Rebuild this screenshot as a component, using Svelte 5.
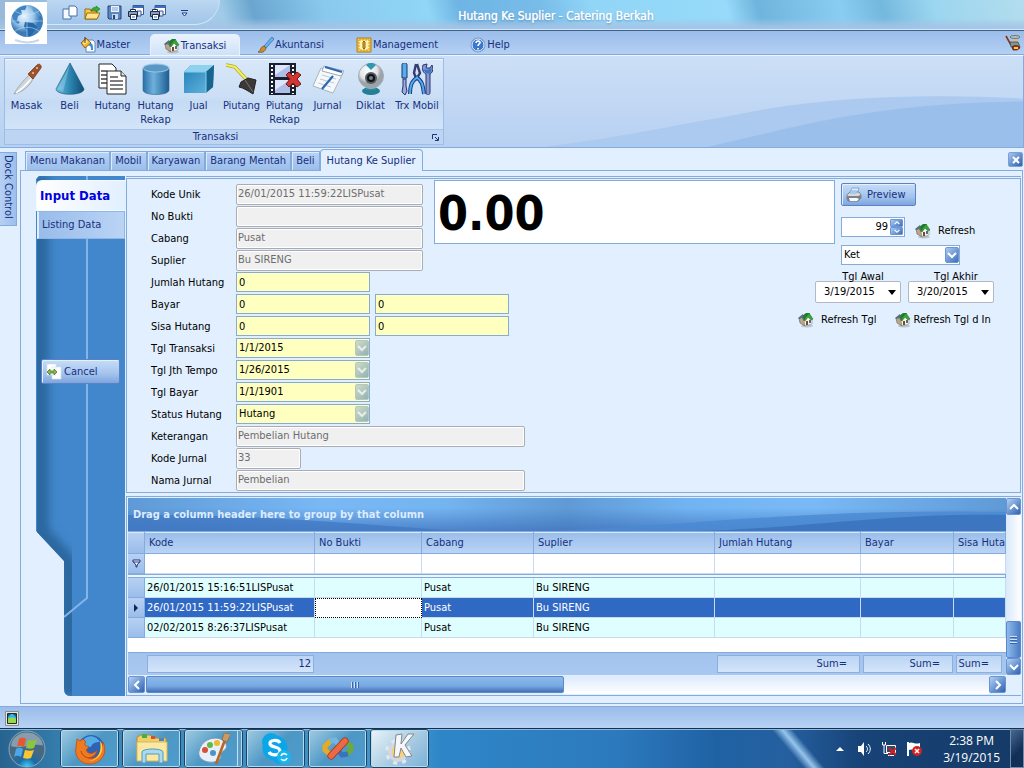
<script lang="ts">
  const ribbonTabs = [
    { label: 'Master', icon: 'bucket' },
    { label: 'Transaksi', icon: 'house' },
    { label: 'Akuntansi', icon: 'brush' },
    { label: 'Management', icon: 'dial' },
    { label: 'Help', icon: 'help' },
  ];

  const ribbonItems = [
    { label: 'Masak', icon: 'knife' },
    { label: 'Beli', icon: 'cone' },
    { label: 'Hutang', icon: 'docs' },
    { label: 'Hutang Rekap', icon: 'cylinder' },
    { label: 'Jual', icon: 'box' },
    { label: 'Piutang', icon: 'axe' },
    { label: 'Piutang Rekap', icon: 'film' },
    { label: 'Jurnal', icon: 'notepad' },
    { label: 'Diklat', icon: 'webcam' },
    { label: 'Trx Mobil', icon: 'tools' },
  ];

  const docTabs = ['Menu Makanan', 'Mobil', 'Karyawan', 'Barang Mentah', 'Beli', 'Hutang Ke Suplier'];

  const fields = [
    { id: 'kode-unik', label: 'Kode Unik', kind: 'locked', value: '26/01/2015 11:59:22LISPusat', size: 'medium' },
    { id: 'no-bukti', label: 'No Bukti', kind: 'locked', value: '', size: 'medium' },
    { id: 'cabang', label: 'Cabang', kind: 'locked', value: 'Pusat', size: 'medium' },
    { id: 'suplier', label: 'Suplier', kind: 'locked', value: 'Bu SIRENG', size: 'medium' },
    { id: 'jumlah', label: 'Jumlah Hutang', kind: 'number', value: '0', size: 'short' },
    { id: 'bayar', label: 'Bayar', kind: 'pair', value: '0', size: 'short' },
    { id: 'sisa', label: 'Sisa Hutang', kind: 'pair', value: '0', size: 'short' },
    { id: 'tgl-transaksi', label: 'Tgl Transaksi', kind: 'date', value: '1/1/2015', size: 'short' },
    { id: 'tgl-tempo', label: 'Tgl Jth Tempo', kind: 'date', value: '1/26/2015', size: 'short' },
    { id: 'tgl-bayar', label: 'Tgl Bayar', kind: 'date', value: '1/1/1901', size: 'short' },
    { id: 'status', label: 'Status Hutang', kind: 'select', value: 'Hutang', size: 'short' },
    { id: 'keterangan', label: 'Keterangan', kind: 'locked', value: 'Pembelian Hutang', size: 'long' },
    { id: 'kode-jurnal', label: 'Kode Jurnal', kind: 'locked', value: '33', size: 'tiny' },
    { id: 'nama-jurnal', label: 'Nama Jurnal', kind: 'locked', value: 'Pembelian', size: 'long' },
  ];

  const columns = ['Kode', 'No Bukti', 'Cabang', 'Suplier', 'Jumlah Hutang', 'Bayar', 'Sisa Hutang'];
  const footer = ['12', '', '', '', 'Sum=', 'Sum=', 'Sum='];

  const records = [
    ['26/01/2015 15:16:51LISPusat', '', 'Pusat', 'Bu SIRENG', '', '', ''],
    ['26/01/2015 11:59:22LISPusat', '', 'Pusat', 'Bu SIRENG', '', '', ''],
    ['02/02/2015 8:26:37LISPusat', '', 'Pusat', 'Bu SIRENG', '', '', ''],
  ];

  const quickActions = ['new', 'open', 'save', 'print', 'print'];
  const taskApps = ['firefox', 'explorer', 'paint', 'skype', 'studio', 'kde'];

  let activeRibbon = $state('Transaksi');
  let activeDoc = $state('Hutang Ke Suplier');
  let selected = $state(1);
</script>

{#snippet chevron(dir: string)}
  <svg class="chevron" viewBox="0 0 10 10" width="10" height="10" aria-hidden="true">
    {#if dir === 'down'}
      <path d="M1 3 5 7 9 3" />
    {:else if dir === 'up'}
      <path d="M1 7 5 3 9 7" />
    {:else if dir === 'left'}
      <path d="M7 1 3 5 7 9" />
    {:else}
      <path d="M3 1 7 5 3 9" />
    {/if}
  </svg>
{/snippet}

{#snippet smallIcon(name: string)}
  <svg viewBox="0 0 16 16" width="16" height="16" aria-hidden="true">
    {#if name === 'house'}
      <ellipse cx="9" cy="14" rx="6" ry="1.500" fill="#8b99a8" opacity=".5" />
      <path d="M1 6 4 4 8 8 7 14 2 11Z" fill="#b9a68c" stroke="#5b4a3a" stroke-width=".5" />
      <path d="M6 8 10 4 14 7V12L7 14Z" fill="#f8f4e8" stroke="#7b7263" stroke-width=".5" />
      <path d="M4 4 8 1 12 1 8 5 6 9Z" fill="#1f7d28" />
      <path d="M8 5 11 1 15 7 13 8 10 5 7 9 6 8Z" fill="#37a53c" stroke="#186420" stroke-width=".5" />
      <path d="M0 6 5 2 6 9 4 6 1 7Z" fill="#55707a" />
      <path d="M8 9h2v4H8z" fill="#7a4a2c" /><path d="M11 8h2v3h-2z" fill="#4f6d8c" />
    {:else if name === 'bucket'}
      <path d="M6 3h7l2 2v10H6z" fill="#fff" stroke="#5d86bd" />
      <path d="M9 6c4 0 4 2 4 7h-2c0-3 0-4-3-5z" fill="#2f8fe0" />
      <path d="M1 6 6 1 11 6 5 11Z" fill="#f4b32c" stroke="#7a4f10" stroke-width=".8" />
      <path d="M3 6 6 3 8 5 4 8Z" fill="#ffe9a0" />
      <path d="M5 6V0" stroke="#4a3316" />
    {:else if name === 'brush'}
      <path d="M14 0 16 2 8 11 6 9Z" fill="#67b2f0" stroke="#2867a8" stroke-width=".7" />
      <path d="M6 9 8 11C7 15 4 16 0 15 3 14 2 10 6 9Z" fill="#d08b2c" stroke="#704310" stroke-width=".7" />
    {:else if name === 'dial'}
      <path d="M1 1h14v14H1z" fill="#f3c94c" stroke="#b37d12" />
      <path d="M3 3h10v10H3z" fill="#fff1a8" stroke="#d09c28" stroke-dasharray="2 1" />
      <path d="M8 4 9 5V11L8 12 7 11V5Z" fill="#f3b32a" stroke="#6b4707" stroke-width=".8" />
    {:else if name === 'help'}
      <circle cx="8" cy="8" r="7" fill="#3a78cf" stroke="#7f9cc6" />
      <circle cx="8" cy="8" r="6" fill="none" stroke="#e8f3ff" />
      <path d="M6 6c0-3 5-2 4 0-.5 1-2 1-2 3M8 11v1.500" fill="none" stroke="#fff" stroke-width="1.600" />
    {:else if name === 'new'}
      <path d="M1 4h6l2 2v8H1z" fill="#f4f9ff" stroke="#466fae" />
      <path d="M7 1h6l2 2v8H7z" fill="#fff" stroke="#466fae" />
    {:else if name === 'open'}
      <path d="M1 4h5l1 2h6v8H1z" fill="#f7c948" stroke="#9a6c10" />
      <path d="M3 8h13l-3 6H1z" fill="#ffe48c" stroke="#9a6c10" />
      <path d="M7 6c1-4 4-4 5-3V1l4 3-4 3V5c-2 0-3 0-5 1z" fill="#38b22f" stroke="#17720f" stroke-width=".6" />
    {:else if name === 'save'}
      <path d="M2 1h13v13H3l-1-1z" fill="#5d86bf" stroke="#22447c" />
      <path d="M5 1h8v6H5z" fill="#eaf4ff" />
      <path d="M6 3h6M6 5h6" stroke="#7fa3cf" />
      <path d="M6 9h6v5H6z" fill="#c7d7ea" /><path d="M7 10h2v4H7z" fill="#22447c" />
    {:else if name === 'print'}
      <path d="M5 .5h10.500v9H5z" fill="#fff" stroke="#3c588c" />
      <path d="M5 2h10" stroke="#3a6fc4" stroke-width="2" />
      <path d="M9 6h4v5H9z" fill="#dfeafa" stroke="#3c588c" />
      <path d="M.5 6.500h9v5h-9z" fill="#8c9cb8" stroke="#1d2c4c" />
      <path d="M2.500 4.500h5v2h-5zM2.500 9.500h6v5h-6z" fill="#fff" stroke="#1d2c4c" />
      <path d="M4 12h3" stroke="#3a6fc4" />
    {:else if name === 'printer'}
      <path d="M6 1h7l-2 6H3z" fill="#dceeff" stroke="#6c8fb7" stroke-width=".7" />
      <path d="M1 8 4 5H13L15 8V11L12 14H2L1 12Z" fill="#d6d8db" stroke="#5f646c" stroke-width=".7" />
      <path d="M5 3h6l-1 4H4z" fill="#9fcbf0" />
      <path d="M1 9h11l3-1v3l-3 3H2l-1-2z" fill="#7c8289" /><path d="M3 11h8l2 1-2 2H4z" fill="#f7f9fb" />
    {:else if name === 'cancel'}
      <path d="M1 0h9v11H1zM6 3h9v12H6z" fill="#fff" stroke="#d5dfe9" stroke-width=".6" />
      <path d="M1 8 4 5V7H8V5L11 8 8 11V9H4V11Z" fill="#86b552" stroke="#527d28" stroke-width=".8" />
    {:else if name === 'chef'}
      <path d="M1 1 6 10" stroke="#8a3218" stroke-width="1.600" />
      <ellipse cx="10" cy="2" rx="5" ry="1.500" fill="#b7c2b8" stroke="#3f4a43" stroke-width=".6" />
      <path d="M8 4h4v3H8z" fill="#e4b386" />
      <path d="M5 7h8l2 5H6z" fill="#7d959a" stroke="#344346" stroke-width=".7" />
      <path d="M7 12c2-2 7-2 8 1l-3 2H8z" fill="#a83218" stroke="#442011" stroke-width=".7" /><path d="M9 13h4" stroke="#ffca36" stroke-width="2" />
    {:else if name === 'picture'}
      <path d="M1.500 1.500h13v14h-13z" fill="#e8e5df" stroke="#8a8d8a" />
      <path d="M3.500 3.500h9v10h-9z" fill="#34b7df" stroke="#222b33" />
      <path d="M4 4h3L4 7zM12 4H9l3 3z" fill="#1c5b78" />
      <path d="M4 9c2-2 6-2 8 0v4H4z" fill="#99d84a" />
    {/if}
  </svg>
{/snippet}

{#snippet ribbonIcon(name: string)}
  <svg viewBox="0 0 32 32" width="32" height="32" aria-hidden="true">
    {#if name === 'knife'}
      <path d="M18 12 22 16C18 24 11 29 3 31 6 25 12 18 18 12Z" fill="#cfd6da" stroke="#8c979e" stroke-width=".7" />
      <path d="M5 30C11 26 16 21 20 16" stroke="#fff" fill="none" stroke-width="1.500" />
      <path d="M17 11 26 2C28 0 31 2 30 5L22 16Z" fill="#a0522a" stroke="#6a2d12" stroke-width=".7" />
      <circle cx="26" cy="5" r="1" fill="#efc5a0" /><circle cx="22" cy="10" r="1" fill="#efc5a0" />
    {:else if name === 'cone'}
      <path d="M16 0 30 26C30 33 2 33 2 26Z" fill="url(#steel)" stroke="#155478" stroke-width=".6" />
      <path d="M16 1 9 29 4 26Z" fill="#c7efff" opacity=".3" />
    {:else if name === 'docs'}
      <path d="M2 1h13l4 4v20H2z" fill="#fff" stroke="#222" />
      <path d="M4 8h6M4 12h6M4 16h6M4 20h6" stroke="#444" stroke-width="1.400" />
      <path d="M10 8h14l5 5v18H10z" fill="#fff" stroke="#222" /><path d="M24 8v5h5" fill="#ddd" stroke="#222" />
      <path d="M13 14h8M13 18h13M13 22h13M13 26h13" stroke="#555" stroke-width="1.400" />
    {:else if name === 'cylinder'}
      <path d="M3 5V27C3 33 29 33 29 27V5Z" fill="url(#steelwide)" stroke="#2b6691" stroke-width=".6" />
      <ellipse cx="16" cy="5" rx="13" ry="4" fill="#5b97c5" stroke="#93c9e8" />
    {:else if name === 'box'}
      <path d="M1 9 8 2H31L30 24 22 30H1Z" fill="#2f87b9" />
      <path d="M1 9 8 2H31L23 9Z" fill="#8fd2ee" /><path d="M1 9H23V30H1Z" fill="url(#face)" />
      <path d="M23 9 31 2 30 24 23 30Z" fill="#19648f" /><path d="M1 9H23V30" fill="none" stroke="#80cfee" />
    {:else if name === 'axe'}
      <path d="M0 2 5 3 9 4 19 15 23 18" fill="none" stroke="#aaa82c" stroke-width="3.600" />
      <path d="M0 2 5 3 9 4 19 15 23 18" fill="none" stroke="#f5ee5c" stroke-width="2.200" />
      <path d="M15 19 22 15 30 17 27 31C22 28 18 25 13 24Z" fill="#3c3838" stroke="#222" />
      <path d="m19 17 8 12" stroke="#777" />
    {:else if name === 'film'}
      <path d="M0 0h27v32H0z" fill="#1b2030" /><path d="M6 2h15v12H6zM6 17h15v13H6z" fill="#aebfe7" />
      <path d="m6 2 15 0-15 10zM6 17h15L6 27z" fill="#dce6fb" />
      <path d="M3 2v29M24 2v29" stroke="#fff" stroke-width="2" stroke-dasharray="2 2" />
      <path d="m17 12 3-3 4 4 4-4 4 3-4 4 4 5-4 3-4-4-4 4-3-3 4-5z" fill="#cf3531" stroke="#7c1515" />
    {:else if name === 'notepad'}
      <path d="M9 5 31 10 21 30 1 23Z" fill="#f6f9fc" stroke="#a8b4c0" />
      <path d="M12 3 32 8 29 13 10 8Z" fill="#fff" stroke="#9cabba" />
      <path d="m10 12 14 4M8 16l14 4M6 20l13 4" stroke="#b8c9da" />
      <path d="M13 4 30 9M10 26 21 13" stroke="#2d69ae" stroke-width="2.200" />
    {:else if name === 'webcam'}
      <ellipse cx="16" cy="28" rx="9" ry="4" fill="#247f96" /><path d="M11 23h10v4H11z" fill="#2b8ea6" />
      <circle cx="16" cy="13" r="12.500" fill="url(#orb)" stroke="#a7adb3" />
      <path d="M11 2c3-3 7-3 10 0l-5 5z" fill="#2f9aaf" />
      <circle cx="16" cy="15" r="6" fill="#555a60" /><circle cx="16" cy="15" r="4" fill="#111" />
      <circle cx="16" cy="15" r="2" fill="#6f7f91" />
    {:else if name === 'tools'}
      <path d="M1 2c0-3 5-3 5 0v13H1z" fill="#53aef0" stroke="#173669" /><path d="M2 16h3v7l1 5-2 4-3-3 1-6z" fill="#9dabdf" stroke="#29356c" />
      <path d="M15 1 13 10 15 15M16 1 19 10 16 15" fill="none" stroke="#343c70" stroke-width="2.400" />
      <path d="M17 14C10 18 9 24 9 31M15 14C22 18 22 24 23 31" fill="none" stroke="#183e82" stroke-width="4" />
      <path d="M17 14C10 18 9 24 9 31M15 14C22 18 22 24 23 31" fill="none" stroke="#55a9ef" stroke-width="2" />
      <path d="M22 2 26 1 25 5 29 5 31 2C33 7 31 10 29 11V29C29 33 25 33 25 29V11C21 9 21 5 22 2Z" fill="#8b97d1" stroke="#27356e" />
      <path d="M22 6 26 7 31 5 29 11 25 10Z" fill="#3974c5" />
    {/if}
  </svg>
{/snippet}

{#snippet taskIcon(name: string)}
  <svg viewBox="0 0 32 32" width="32" height="32" aria-hidden="true">
    {#if name === 'firefox'}
      <circle cx="17" cy="15" r="13" fill="#2d62b6" /><path d="M10 6c5-5 13-3 16 3-4 0-8 1-9 5l-6-1z" fill="#55abe4" />
      <path d="M3 6 6 8 9 6 12 9C8 13 14 13 15 14L12 17C14 22 20 21 23 17 21 27 9 27 7 18 9 27 25 30 28 14L29 9C35 22 25 31 16 31 6 31 0 23 2 14Z" fill="#ef7b20" stroke="#c74715" stroke-width=".8" />
      <path d="M28 11c2 10-5 17-13 17 10-2 13-10 11-20z" fill="#ffd23c" />
    {:else if name === 'explorer'}
      <path d="M1 4 5 2H14L17 5H30V27H1Z" fill="#f0ce69" stroke="#b18d35" />
      <path d="M6 1h5v4H6z" fill="#48ad48" /><path d="M15 3h4v3h-4z" fill="#d54c37" /><path d="M23 5h5v3h-5z" fill="#4487d0" />
      <path d="M1 9H31V28H1Z" fill="#fbe8a1" stroke="#d8b75d" />
      <path d="M6 19c0-4 21-4 21 0v11h-4v-9H10v9H6z" fill="#a9daf2" stroke="#5697bd" />
    {:else if name === 'paint'}
      <path d="M1 18C4 4 23 1 28 11 31 18 21 17 23 24 20 33-2 30 1 18Z" fill="#e8eff7" stroke="#7696b5" />
      <circle cx="7" cy="17" r="3" fill="#d84f3c" /><circle cx="12" cy="12" r="3" fill="#5fb848" /><circle cx="19" cy="10" r="3" fill="#eeb832" /><circle cx="15" cy="20" r="3" fill="#4a93cc" />
      <path d="M28 4 18 31" stroke="#b76823" stroke-width="2.600" /><path d="M24 7 26 0 33 1 29 9Z" fill="#c99a68" stroke="#8a5e32" stroke-width=".6" />
    {:else if name === 'skype'}
      <circle cx="11" cy="9" r="9" fill="#0aa6e8" /><circle cx="20" cy="23" r="8" fill="#0aa6e8" /><circle cx="15" cy="15" r="12.500" fill="#0aa6e8" />
      <path d="M20 10C18 6 9 7 10 11 11 15 20 13 20 18 20 23 11 23 9 19" fill="none" stroke="#fff" stroke-width="3.200" />
      <circle cx="24" cy="24" r="7" fill="#19b5ee" />
      <path d="M21 23c1-3 4-3 6-1M27 25c-1 3-4 3-6 1" fill="none" stroke="#fff" stroke-width="1.600" />
    {:else if name === 'studio'}
      <path d="M10 7 3 13V17L9 22 13 20" fill="none" stroke="#e8aa24" stroke-width="5" stroke-linejoin="round" />
      <path d="m8 8 5-1 6 8" fill="none" stroke="#72b7e4" stroke-width="5" />
      <path d="M22 8 29 13V17L23 22" fill="none" stroke="#6daa3c" stroke-width="5" stroke-linejoin="round" />
      <path d="m15 16 5 6 6-1" fill="none" stroke="#3973bf" stroke-width="5" />
      <path d="M9 23 23 8" stroke="#a92f17" stroke-width="7" stroke-linecap="round" />
      <path d="M9 23 23 8" stroke="#ec6a43" stroke-width="5.500" stroke-linecap="round" />
    {:else if name === 'kde'}
      <circle cx="14" cy="19" r="11" fill="none" stroke="#e3e7eb" stroke-width="4" stroke-dasharray="4 5" />
      <circle cx="14" cy="19" r="8" fill="#e5a92e" stroke="#d2d8de" stroke-width="4" />
      <circle cx="14" cy="19" r="6" fill="#ffd66a" />
      <path d="M12 2 18 1 17 11 24 1H30L21 12 28 23 22 24 17 15 15 24H10Z" fill="#f6f7f9" stroke="#7f8790" />
    {/if}
  </svg>
{/snippet}

<div class="window">
  <!-- shared gradients for the 3D ribbon icons -->
  <svg class="defs" width="0" height="0" aria-hidden="true">
    <defs>
      <linearGradient id="steel"><stop offset="0" stop-color="#6dbde2" /><stop offset=".5" stop-color="#2c86b0" /><stop offset="1" stop-color="#0f4c72" /></linearGradient>
      <linearGradient id="steelwide"><stop offset="0" stop-color="#2a6fa8" /><stop offset=".4" stop-color="#6fb1dc" /><stop offset="1" stop-color="#1b5d91" /></linearGradient>
      <linearGradient id="face" x2="1" y2="1"><stop offset="0" stop-color="#2a86bd" /><stop offset="1" stop-color="#5eb0da" /></linearGradient>
      <radialGradient id="orb" cx=".4" cy=".3"><stop offset="0" stop-color="#fff" /><stop offset=".7" stop-color="#e2e5e8" /><stop offset="1" stop-color="#9aa2aa" /></radialGradient>
      <radialGradient id="globe" cx=".4" cy=".35"><stop offset="0" stop-color="#eaf6ff" /><stop offset=".6" stop-color="#9cc9ec" /><stop offset="1" stop-color="#3b7cb8" /></radialGradient>
      <radialGradient id="start" cx=".5" cy="1"><stop offset="0" stop-color="#3fd6ff" /><stop offset=".5" stop-color="#1c6aa5" /><stop offset="1" stop-color="#466982" /></radialGradient>
    </defs>
  </svg>

  <header class="titlebar">
    <button class="app-button" aria-label="Application menu">
      <svg viewBox="0 0 42 42" width="42" height="42" aria-hidden="true">
        <rect width="42" height="42" fill="#fff" />
        <circle cx="22" cy="19" r="16" fill="url(#globe)" />
        <path d="M7 14C10 7 17 3 22 4L20 8 16 8 17 12 13 14 12 18 15 20 13 22 9 19Z" fill="#3f83c0" />
        <path d="M20 20 28 21 32 25 29 29 26 34 23 34 22 28 19 25Z" fill="#2468aa" />
        <path d="M27 5 33 9 36 14 31 12 28 9Z" fill="#5d9bd0" />
        <path d="M6 19H38M22 3V35M10 9C18 14 26 14 34 9M10 29C18 24 26 24 34 29" stroke="#d5eafa" stroke-width=".5" fill="none" />
        <path d="M10 38c8 3 17 3 24 0" stroke="#c5d9ec" stroke-width="2" fill="none" />
      </svg>
    </button>
    <div class="quick-access">
      {#each quickActions as action}
        <button class="plain" aria-label={action}>{@render smallIcon(action)}</button>
      {/each}
      <button class="plain more" aria-label="Customize toolbar">
        <svg viewBox="0 0 7 7" width="7" height="7"><path d="M0 .5h7" stroke="#1e3c86" /><path d="M1 3h5L3.500 6z" fill="#fff" stroke="#1e3c86" /></svg>
      </button>
    </div>
    <h1>Hutang Ke Suplier - Catering Berkah</h1>
  </header>

  <nav class="ribbon-tabs">
    {#each ribbonTabs as tab}
      <button class:active={activeRibbon === tab.label} onclick={() => (activeRibbon = tab.label)}>
        {@render smallIcon(tab.icon)}{tab.label}
      </button>
    {/each}
    <span class="chef">{@render smallIcon('chef')}</span>
  </nav>

  <section class="ribbon">
    <svg class="swoosh" viewBox="0 0 480 92" preserveAspectRatio="none" aria-hidden="true">
      <path d="M0 92C80 82 120 72 180 62 280 40 380 38 480 43V92Z" fill="#acc9ef" />
      <path d="M165 92C260 70 330 48 480 46V92Z" fill="#9bbfeb" />
    </svg>
    <div class="ribbon-group">
      <div class="ribbon-items">
        {#each ribbonItems as item}
          <button>{@render ribbonIcon(item.icon)}<span>{item.label}</span></button>
        {/each}
      </div>
      <div class="ribbon-caption">
        <span>Transaksi</span>
        <button class="plain" aria-label="Transaksi options">
          <svg viewBox="0 0 7 7" width="7" height="7"><path d="M.5 5V.5H5M3 3 6 6M6.500 3v3.500H3" fill="none" stroke="#1c3479" /></svg>
        </button>
      </div>
    </div>
  </section>

  <main>
    <aside class="dock"><button>Dock Control</button></aside>

    <div class="documents">
      <div class="doc-tabs">
        {#each docTabs as tab}
          <button class:active={activeDoc === tab} onclick={() => (activeDoc = tab)}>{tab}</button>
        {/each}
        <button class="close" aria-label="Close tab">
          <svg viewBox="0 0 8 8" width="8" height="8"><path d="m1 1 6 6M7 1 1 7" stroke="#fff" stroke-width="2" /></svg>
        </button>
      </div>

      <div class="page">
        <nav class="side-nav">
          <svg class="side-shape" viewBox="0 0 90 520" preserveAspectRatio="none" aria-hidden="true">
            <defs>
              <clipPath id="side"><path d="M3 0H89V520H34Q28 520 28 512V385L0 355V3Z" /></clipPath>
              <filter id="soft"><feGaussianBlur stdDeviation="4" /></filter>
            </defs>
            <g clip-path="url(#side)">
              <path d="M0 0H90V520H0Z" fill="#4287cb" />
              <path d="M4 0V356L33 388V520" fill="none" stroke="#2c689f" stroke-width="18" filter="url(#soft)" />
              <path d="M51 0V422L28 441" fill="none" stroke="#83b5ea" stroke-width="2" />
            </g>
          </svg>
          <button class="nav-item current">Input Data</button>
          <button class="nav-item">Listing Data</button>
          <button class="push cancel">{@render smallIcon('cancel')}Cancel</button>
        </nav>

        <div class="work">
          <section class="form">
            <div class="summary">
              <div class="summary-top">
                <output class="total">0.00</output>
                <div class="actions">
                  <button class="push preview">{@render smallIcon('printer')}Preview</button>
                  <div class="line">
                    <span class="spinner">
                      <input type="text" value="99" aria-label="Jumlah baris" />
                      <span class="spin">
                        <button aria-label="Tambah">{@render chevron('up')}</button>
                        <button aria-label="Kurang">{@render chevron('down')}</button>
                      </span>
                    </span>
                    <button class="plain refresh">{@render smallIcon('house')}Refresh</button>
                  </div>
                </div>
              </div>
              <div class="filters">
                <div class="combo white">
                  <select aria-label="Filter"><option>Ket</option></select>
                  <span class="arrow">{@render chevron('down')}</span>
                </div>
                <div class="range">
                  <div class="range-item">
                    <label for="tgl-awal">Tgl Awal</label>
                    <span class="picker"><input id="tgl-awal" value="3/19/2015" /><button aria-label="Pilih tanggal awal"></button></span>
                  </div>
                  <div class="range-item">
                    <label for="tgl-akhir">Tgl Akhir</label>
                    <span class="picker"><input id="tgl-akhir" value="3/20/2015" /><button aria-label="Pilih tanggal akhir"></button></span>
                  </div>
                </div>
                <div class="range-actions">
                  <button class="plain refresh">{@render smallIcon('house')}Refresh Tgl</button>
                  <button class="plain refresh tight">{@render smallIcon('house')}Refresh Tgl d In</button>
                </div>
              </div>
            </div>

            <div class="fields">
              {#each fields as field}
                <div class="field">
                  <label for={field.id}>{field.label}</label>
                  {#if field.kind === 'locked'}
                    <input id={field.id} class={['locked', field.size]} value={field.value} disabled />
                  {:else if field.kind === 'date'}
                    <span class="combo">
                      <input id={field.id} value={field.value} />
                      <button class="arrow" aria-label="Pilih {field.label}">{@render chevron('down')}</button>
                    </span>
                  {:else if field.kind === 'select'}
                    <span class="combo">
                      <select id={field.id}><option>{field.value}</option></select>
                      <span class="arrow">{@render chevron('down')}</span>
                    </span>
                  {:else}
                    <input id={field.id} class="yellow short" value={field.value} />
                    {#if field.kind === 'pair'}
                      <input class="yellow short" value={field.value} aria-label="{field.label} total" />
                    {/if}
                  {/if}
                </div>
              {/each}
            </div>
          </section>

          <section class="grid-panel">
            <div class="grid-body">
              <div class="grid-view">
                <div class="group-banner">
                  <svg viewBox="0 0 878 33" preserveAspectRatio="none" aria-hidden="true">
                    <path d="M0 17C120 16 220 25 330 33H0Z" fill="#3f78c2" opacity=".7" />
                    <path d="M420 33C560 28 680 10 878 14V33Z" fill="#4a89d2" opacity=".8" />
                    <path d="M570 33C680 30 760 15 878 17V33Z" fill="#3a70bb" opacity=".8" />
                  </svg>
                  <span>Drag a column header here to group by that column</span>
                </div>
                <table>
                  <colgroup>
                    <col class="c-mark" /><col class="c-kode" /><col class="c-bukti" /><col class="c-cabang" />
                    <col class="c-suplier" /><col class="c-jumlah" /><col class="c-bayar" /><col />
                  </colgroup>
                  <thead>
                    <tr>
                      <th class="mark"></th>
                      {#each columns as column}
                        <th>{column}</th>
                      {/each}
                    </tr>
                    <tr class="filter-row">
                      <td class="mark">
                        <svg viewBox="0 0 9 9" width="9" height="9"><path d="M1 1h7v2H1zM1.500 3 4 6v2h1V6l2.500-3" fill="#fff" stroke="#1c3479" /></svg>
                      </td>
                      {#each columns as _}
                        <td></td>
                      {/each}
                    </tr>
                    <tr class="divider"><td colspan="8"></td></tr>
                  </thead>
                  <tbody>
                    {#each records as record, i}
                      <tr class:selected={selected === i} onclick={() => (selected = i)}>
                        <td class="mark">
                          {#if selected === i}
                            <svg viewBox="0 0 4 8" width="4" height="8"><path d="M0 0 4 4 0 8Z" fill="#14235c" /></svg>
                          {/if}
                        </td>
                        {#each record as cell, c}
                          <td class:focused={selected === i && c === 1}>{cell}</td>
                        {/each}
                      </tr>
                    {/each}
                    <tr class="blank"><td colspan="8"></td></tr>
                  </tbody>
                  <tfoot>
                    <tr>
                      <td></td>
                      {#each footer as total}
                        <td>
                          {#if total}
                            <div class="sum" class:count={total === '12'}>{total}</div>
                          {/if}
                        </td>
                      {/each}
                    </tr>
                  </tfoot>
                </table>
              </div>
              <div class="v-scroll">
                <button class="scroll-btn" aria-label="Scroll up">{@render chevron('up')}</button>
                <div class="v-track"></div>
                <div class="v-thumb"><i></i><i></i><i></i></div>
                <button class="scroll-btn" aria-label="Scroll down">{@render chevron('down')}</button>
              </div>
            </div>
            <div class="h-scroll">
              <button class="scroll-btn" aria-label="Scroll left">{@render chevron('left')}</button>
              <div class="h-thumb"><i></i><i></i><i></i></div>
              <div class="h-track"></div>
              <button class="scroll-btn" aria-label="Scroll right">{@render chevron('right')}</button>
            </div>
          </section>
        </div>
      </div>
    </div>
  </main>

  <div class="status-bar">{@render smallIcon('picture')}</div>

  <footer class="taskbar">
    <button class="start" aria-label="Start">
      <svg viewBox="0 0 38 38" width="38" height="38" aria-hidden="true">
        <circle cx="19" cy="19" r="18" fill="url(#start)" stroke="#86a9bf" />
        <path d="M3 16C5-2 33-2 35 16 26 12 12 20 3 16Z" fill="#fff" opacity=".35" />
        <path d="M11 9C14 7 16 8 18 9L16 17C14 16 12 15 9 17Z" fill="#e8562b" />
        <path d="M20 10C23 11 26 11 29 9L26 18C24 19 21 19 18 18Z" fill="#8cc63e" />
        <path d="M8 19C11 17 13 18 15 19L13 27C11 26 9 25 6 27Z" fill="#48a8e8" />
        <path d="M17 20C20 21 23 21 26 20L23 28C21 29 18 29 15 28Z" fill="#fbc630" />
      </svg>
    </button>
    <div class="apps">
      {#each taskApps as app}
        <button class={[app === 'kde' && 'running', app === 'paint' && 'stacked']} aria-label={app}>
          {@render taskIcon(app)}
        </button>
      {/each}
    </div>
    <div class="tray">
      <svg viewBox="0 0 8 4" width="8" height="4"><path d="M0 4 4 0 8 4Z" fill="#fff" /></svg>
      <svg viewBox="0 0 16 16" width="16" height="16">
        <path d="M2 5h3l3-4v14l-3-4H2z" fill="#fff" />
        <path d="M10 5c2 2 2 4 0 6M12 3c3 3 3 7 0 10" fill="none" stroke="#fff" />
      </svg>
      <svg viewBox="0 0 16 16" width="16" height="16">
        <path d="M5.500 4.500h9v7h-9z" fill="#33496b" stroke="#fff" /><path d="M1.500 1v3h3V1M3 4v8.500h4M7 14.500h6" fill="none" stroke="#fff" />
        <path d="m8 7 7 7m0-7-7 7" stroke="#d81c1c" stroke-width="2" />
      </svg>
      <svg viewBox="0 0 16 16" width="16" height="16">
        <path d="M2 1v14" stroke="#fff" stroke-width="2" /><path d="M3 2c4-2 5 2 11 0v7c-6 2-7-2-11 0z" fill="#fff" />
        <circle cx="11" cy="10" r="5" fill="#d32222" /><path d="m9 8 4 4m0-4-4 4" stroke="#fff" stroke-width="1.500" />
      </svg>
      <time class="clock"><span>2:38 PM</span><span>3/19/2015</span></time>
    </div>
    <button class="show-desktop" aria-label="Show desktop"></button>
  </footer>
</div>

<style>
  :global(body) {
    margin: 0;
  }

  .window {
    --line: #84abdd;
    --ink: #17307e;
    --panel: #e1effe;
    display: flex;
    flex-direction: column;
    min-height: 100vh;
    background: var(--panel);
    color: #000;
    font-family: 'DejaVu Sans Condensed', Tahoma, sans-serif;
    font-size: 11px;
    line-height: 14px;
  }

  .window,
  .window :is(*, *::before, *::after) {
    box-sizing: border-box;
  }

  .defs {
    position: absolute;
  }

  svg {
    flex: none;
    display: block;
  }

  button,
  input,
  select {
    margin: 0;
    padding: 0;
    border: 0;
    border-radius: 0;
    background: none;
    color: inherit;
    font: inherit;
  }

  input,
  select {
    min-width: 0;
    appearance: none;
    outline: none;
  }

  .plain {
    display: flex;
    align-items: center;
  }

  .chevron path {
    fill: none;
    stroke: #fff;
    stroke-width: 2;
  }

  /* title bar */
  .titlebar {
    display: flex;
    height: 31px;
    border-bottom: 1px solid #3e5f86;
    box-shadow: inset 0 -1px #d4e7fa;
    background:
      linear-gradient(transparent 60%, rgba(165, 196, 230, 0.9) 90%),
      linear-gradient(75deg, #98b9da 0, #a6cbe9 20%, #9fcbe8 22%, #6aa5cf 25%, #8ac9ee 32%, #90d6f6 42%, #6eb5e5 45%, #78bce9 53%, #91d6f7 58%, #97dafa 71%, #6fb4dc 74%, #8acdf2 82%, #74b8de 86%, #9bd6ef 91%, #b3ddee 100%);
  }

  .app-button {
    position: relative;
    z-index: 1;
    height: 42px;
    margin: 2px 0 0 5px;
  }

  .quick-access {
    display: flex;
    align-items: center;
    gap: 6px;
    width: 173px;
    height: 25px;
    padding: 2px 0 0 15px;
    border-bottom: 1px solid #d5e8fa;
    border-right: 1px solid #c8e0f5;
    border-radius: 0 0 40px 0;
    background: linear-gradient(#bcd7f1, #a2c5e9);
  }

  .more {
    margin-left: 9px;
  }

  h1 {
    flex: 1;
    margin: 0;
    padding: 9px 132px 0 0;
    color: #fff;
    font-size: 12px;
    font-weight: 400;
    text-align: center;
    text-shadow: 0 0 1px #fff, 0 1px 2px #4b86b5;
  }

  /* ribbon */
  .ribbon-tabs {
    display: flex;
    align-items: flex-end;
    height: 24px;
    padding: 0 3px 0 60px;
    background: linear-gradient(#9bbdea, #b4d0f3);
    border-bottom: 1px solid var(--line);
  }

  .ribbon-tabs button {
    display: flex;
    align-items: center;
    justify-content: center;
    gap: 1px;
    width: 90px;
    height: 20px;
    padding-top: 1px;
    color: var(--ink);
  }

  .ribbon-tabs button:nth-child(3) {
    margin-left: 4px;
    margin-right: 3px;
    width: 94px;
  }

  .ribbon-tabs button:nth-child(4) {
    width: 112px;
  }

  .ribbon-tabs button:nth-child(5) {
    width: 74px;
  }

  .ribbon-tabs .active {
    height: 21px;
    margin-bottom: -1px;
    border: 1px solid #e8f2fd;
    border-bottom: 0;
    border-radius: 5px 5px 0 0;
    background: linear-gradient(#eaf3fe, #cfe1f7);
  }

  .chef {
    margin: 0 0 3px auto;
  }

  .ribbon {
    position: relative;
    padding: 2px 3px 2px 4px;
    border: 1px solid var(--line);
    border-top-color: #eef6ff;
    border-left-width: 0;
    background: linear-gradient(#ccdff6, #b7d1f2);
  }

  .swoosh {
    position: absolute;
    top: 0;
    right: 0;
    width: 480px;
    height: 100%;
  }

  .ribbon-group {
    position: relative;
    width: 440px;
    border: 1px solid #9dbde8;
    box-shadow: inset 0 1px #f2f8ff;
    background: linear-gradient(#d9e8f9, #cadef5 45%, #c5dbf4 50%, #d9e9fa);
  }

  .ribbon-items {
    display: flex;
    height: 70px;
    padding-top: 4px;
  }

  .ribbon-items button {
    display: flex;
    flex-direction: column;
    align-items: center;
    gap: 4px;
    width: 43px;
    color: var(--ink);
  }

  .ribbon-items button:last-child {
    width: 50px;
    white-space: nowrap;
  }

  .ribbon-caption {
    display: flex;
    align-items: center;
    height: 15px;
    padding-right: 4px;
    border-top: 1px solid #a7c5ec;
    background: #bdd5f3;
    color: var(--ink);
  }

  .ribbon-caption span {
    flex: 1;
    padding-right: 6px;
    text-align: center;
  }

  /* documents */
  main {
    flex: 1;
    display: flex;
    padding-top: 1px;
  }

  .dock {
    width: 20px;
    padding-top: 3px;
  }

  .dock button {
    width: 17px;
    height: 74px;
    padding-bottom: 5px;
    border: 1px solid var(--line);
    border-left: 0;
    background: linear-gradient(90deg, #b5d0f4, #9dbfec);
    color: var(--ink);
    writing-mode: vertical-rl;
    white-space: nowrap;
  }

  .documents {
    flex: 1;
    min-width: 0;
    display: flex;
    flex-direction: column;
    padding: 0 1px 2px 0;
  }

  .doc-tabs {
    display: flex;
    align-items: flex-end;
    height: 21px;
    padding-left: 5px;
  }

  .doc-tabs button {
    height: 19px;
    padding: 0 4px;
    border: 1px solid var(--line);
    border-bottom: 0;
    box-shadow: inset 1px 1px #dcebfc;
    background: linear-gradient(#b8d2f5, #9bbeea);
    color: var(--ink);
    white-space: nowrap;
  }

  .doc-tabs .active {
    z-index: 1;
    height: 22px;
    margin-bottom: -1px;
    padding: 0 6px;
    border-radius: 4px 4px 0 0;
    box-shadow: none;
    background: var(--panel);
  }

  .doc-tabs .close {
    display: grid;
    place-items: center;
    width: 15px;
    height: 15px;
    margin: 0 0 3px auto;
    padding: 0;
    border: 1px solid #7ba0d6;
    border-radius: 2px;
    box-shadow: none;
    background: linear-gradient(135deg, #a5c8f2, #2f5fab);
  }

  .page {
    flex: 1;
    display: flex;
    padding: 5px 1px 7px 15px;
    border: 1px solid var(--line);
  }

  .side-nav {
    position: relative;
    flex: none;
    width: 90px;
    padding-top: 4px;
  }

  .side-shape {
    position: absolute;
    inset: 0;
    width: 100%;
    height: 100%;
  }

  .nav-item {
    position: relative;
    display: block;
    width: 88px;
    height: 28px;
    margin-left: 1px;
    padding-left: 3px;
    border: 1px solid #8fb6e4;
    border-left: 2px solid #e3effd;
    background: linear-gradient(90deg, #98bcea, #bad4f5);
    color: var(--ink);
    text-align: left;
  }

  .nav-item.current {
    width: 90px;
    height: 31px;
    margin-left: 0;
    border: 1px solid #f5faff;
    border-right: 0;
    border-radius: 6px 0 0 0;
    background: linear-gradient(90deg, #fff, var(--panel));
    color: #0000e0;
    font-size: 13px;
    font-weight: 700;
  }

  .push {
    position: relative;
    display: flex;
    align-items: center;
    border: 1px solid #5b82c4;
    border-radius: 2px;
    box-shadow: inset 1px 1px #e4f0fe;
    background: linear-gradient(#c7ddf8, #a3c3ed 60%, #7da5df);
    color: var(--ink);
  }

  .cancel {
    gap: 2px;
    width: 79px;
    height: 25px;
    margin: 120px 0 0 5px;
    padding-left: 4px;
  }

  .work {
    flex: 1;
    min-width: 0;
    display: flex;
    flex-direction: column;
    gap: 3px;
    padding-top: 1px;
    border-top: 1px solid var(--line);
  }

  /* form */
  .form {
    display: grid;
    border: 1px solid var(--line);
  }

  .summary,
  .fields {
    grid-area: 1 / 1;
  }

  .summary {
    margin-left: 307px;
    padding-top: 1px;
  }

  .fields {
    justify-self: start;
    align-self: start;
    padding: 4px 0 1px 24px;
  }

  .field {
    display: flex;
    align-items: center;
    gap: 5px;
    height: 22px;
  }

  .field label {
    width: 80px;
    padding-top: 2px;
    white-space: nowrap;
  }

  .locked {
    height: 21px;
    padding: 0 1px 2px;
    border: 1px solid #a9acb2;
    border-radius: 2px;
    box-shadow: inset 0 0 0 1px #fff;
    background: #f0f0f0;
    color: #6d6d6d;
  }

  .medium {
    width: 187px;
  }

  .short {
    width: 134px;
  }

  .long {
    width: 289px;
  }

  .tiny {
    width: 65px;
  }

  .yellow,
  .combo {
    height: 20px;
    padding: 0 2px;
    border: 1px solid #86abd4;
    background: #ffffbf;
  }

  .combo {
    display: flex;
    align-items: center;
    width: 134px;
    padding-right: 0;
  }

  .combo :is(input, select) {
    flex: 1;
  }

  .arrow {
    display: grid;
    place-items: center;
    width: 14px;
    height: 16px;
    border: 1px solid #b5c9ba;
    border-radius: 2px;
    background: linear-gradient(135deg, #cfdcc4, #93b1b5);
    pointer-events: none;
  }

  .arrow .chevron,
  .combo .chevron {
    opacity: 0.7;
  }

  .combo.white {
    width: 119px;
    height: 20px;
    margin-left: 43px;
    background: #fff;
  }

  .white .arrow,
  .spin button {
    border: 1px solid #6e96d2;
    background: linear-gradient(135deg, #a9cdf4, #3c6fba);
  }

  .white .chevron {
    opacity: 1;
  }

  .summary-top {
    display: flex;
    gap: 6px;
  }

  .total {
    flex: 1;
    height: 64px;
    padding-left: 3px;
    border: 1px solid var(--line);
    background: #fff;
    font-size: 48px;
    font-weight: 700;
    line-height: 64px;
  }

  .actions {
    width: 179px;
    padding-top: 3px;
  }

  .preview {
    gap: 5px;
    width: 75px;
    height: 23px;
    padding-left: 4px;
  }

  .line {
    display: flex;
    gap: 10px;
    padding-top: 11px;
  }

  .spinner {
    display: flex;
    align-items: center;
    gap: 2px;
    width: 64px;
    height: 20px;
    padding-right: 1px;
    border: 1px solid var(--line);
    background: #fff;
  }

  .spinner input {
    flex: 1;
    text-align: right;
  }

  .spin {
    display: flex;
    flex-direction: column;
    width: 13px;
  }

  .spin button {
    display: grid;
    place-items: center;
    height: 8px;
    border-radius: 1px;
  }

  .spin svg {
    width: 8px;
    height: 6px;
  }

  .refresh {
    gap: 7px;
    padding-top: 6px;
  }

  .refresh.tight {
    gap: 3px;
  }

  .filters {
    width: 222px;
    margin-left: auto;
    padding-top: 1px;
  }

  .range {
    display: flex;
    gap: 7px;
    padding: 5px 0 0 17px;
  }

  .range-item {
    width: 86px;
  }

  .range-item label {
    display: block;
    height: 11px;
    padding-left: 10px;
    text-align: center;
  }

  .picker {
    display: flex;
    align-items: center;
    height: 22px;
    padding: 0 4px 0 8px;
    border: 1px solid #b3b9c4;
    border-radius: 2px;
    background: #fff;
  }

  .picker input {
    flex: 1;
  }

  .picker button {
    border: 4px solid transparent;
    border-top: 5px solid #000;
    border-bottom: 0;
  }

  .range-actions {
    display: flex;
    gap: 18px;
    padding-top: 3px;
    white-space: nowrap;
  }

  /* record grid */
  .grid-panel {
    flex: 1;
    display: flex;
    flex-direction: column;
    padding: 1px 0 0 1px;
    border: 1px solid var(--line);
    border-right: 0;
  }

  .grid-body {
    flex: 1;
    display: flex;
  }

  .grid-view {
    flex: 1;
    min-width: 0;
    overflow: hidden;
    background: #fff;
  }

  .group-banner {
    position: relative;
    display: flex;
    align-items: center;
    height: 33px;
    padding-left: 5px;
    background:
      linear-gradient(transparent 30%, rgba(60, 110, 185, 0.7)),
      linear-gradient(90deg, #5f9ad6, #79b8f5 22%, #74b4f0 36%, #5f9ad6 50%, #72b4f2 64%, #79b9f6 78%, #5f9ad6);
    color: #dcecff;
    font-weight: 700;
  }

  .group-banner svg {
    position: absolute;
    inset: 0;
    width: 100%;
    height: 100%;
  }

  .group-banner span {
    position: relative;
  }

  table {
    width: 100%;
    border-collapse: separate;
    border-spacing: 0;
    table-layout: fixed;
  }

  .c-mark {
    width: 17px;
  }

  .c-kode {
    width: 170px;
  }

  .c-bukti {
    width: 107px;
  }

  .c-cabang {
    width: 112px;
  }

  .c-suplier {
    width: 181px;
  }

  .c-jumlah {
    width: 146px;
  }

  .c-bayar {
    width: 93px;
  }

  th {
    height: 23px;
    padding: 0 0 0 4px;
    overflow: hidden;
    border: 1px solid var(--line);
    border-width: 1px 1px 1px 0;
    background: linear-gradient(#98bdea, #bad4f5);
    box-shadow: inset 0 1px #d9e8fa;
    color: var(--ink);
    font-weight: 400;
    text-align: left;
    white-space: nowrap;
  }

  td {
    height: 20px;
    padding: 0 2px;
    border: 1px solid #c9dbee;
    border-width: 0 1px 1px 0;
    white-space: nowrap;
  }

  tbody td {
    background: #dffeff;
  }

  .mark,
  tbody .mark {
    padding: 0;
    border-color: var(--line);
    background: linear-gradient(#b7d1f4, #9bbdea);
  }

  .mark svg {
    margin: 0 auto;
  }

  .divider td {
    height: 4px;
    padding: 0;
    border: 1px solid var(--line);
    border-left: 0;
    background: #eef5fe;
  }

  .selected td:not(.mark) {
    background: #3069c4;
    color: #fff;
  }

  .selected .focused:not(.mark) {
    border: 1px dotted #000;
    background: #fff;
  }

  .blank td {
    height: 14px;
    border: 0;
    background: #fff;
  }

  tfoot td {
    height: 23px;
    padding: 0 1px 0 2px;
    border: 0;
    border-top: 1px solid var(--line);
    background: linear-gradient(#a3c3ee, #a9c8f0);
  }

  tfoot td:last-child {
    padding-right: 4px;
  }

  .sum {
    height: 18px;
    padding: 1px 12px 0 0;
    border: 1px solid #8bb0e0;
    background: linear-gradient(#bcd5f4, #d3e5fa);
    color: var(--ink);
    text-align: right;
  }

  .sum.count {
    padding-right: 2px;
  }

  .v-scroll {
    display: flex;
    flex-direction: column;
    width: 15px;
  }

  .scroll-btn {
    flex: none;
    display: grid;
    place-items: center;
    width: 15px;
    height: 17px;
    border: 1px solid #6c94d2;
    border-radius: 2px;
    background: linear-gradient(135deg, #b1d2f6, #2f62b0);
  }

  .v-track {
    flex: 1;
    background: linear-gradient(90deg, #d9e9fa, #fff);
  }

  .v-thumb,
  .h-thumb {
    display: flex;
    align-items: center;
    justify-content: center;
    gap: 1px;
    border: 1px solid #5d88c9;
    border-radius: 2px;
    background: linear-gradient(90deg, #8dbbec, #4c7cc4);
  }

  .v-thumb {
    flex-direction: column;
    height: 37px;
  }

  .v-thumb i {
    width: 7px;
    height: 2px;
    border-bottom: 1px solid #3a66ab;
    background: #cfe2f8;
  }

  .h-scroll {
    display: flex;
    height: 20px;
    padding: 1px 15px 1px 0;
  }

  .h-scroll .scroll-btn {
    width: 17px;
  }

  .h-thumb {
    flex: 99;
    height: 17px;
    margin-left: 1px;
    background: linear-gradient(#8abaea, #78a9e2 60%, #436fb6);
  }

  .h-thumb i {
    width: 2px;
    height: 6px;
    border-right: 1px solid #3a66ab;
    background: #cfe2f8;
  }

  .h-track {
    flex: 101;
    background: linear-gradient(#dceafb, #fff);
  }

  .status-bar {
    display: flex;
    align-items: center;
    height: 22px;
    padding-left: 4px;
    border-top: 1px solid var(--line);
    background: linear-gradient(#9bbdea, #b7d2f4);
  }

  /* taskbar */
  .taskbar {
    display: flex;
    align-items: stretch;
    height: 40px;
    border-top: 1px solid #17304e;
    box-shadow: inset 0 1px #8dbbe0;
    background:
      linear-gradient(50deg, transparent 42%, rgba(170, 215, 250, 0.85) 50%, transparent 58%) 81% 0 / 100px 100% no-repeat,
      linear-gradient(90deg, #27638f 0, #3a87b8 8%, #4795c8 40%, #2e86c8 43%, #2c7abd 60%, #1f62a4 70%, #255f9f 77%, #174377 84%, #153a66 100%);
    color: #fff;
  }

  .start {
    width: 60px;
    display: grid;
    place-items: center;
    padding-right: 6px;
  }

  .apps {
    flex: 1;
    display: flex;
    gap: 3px;
  }

  .apps button {
    display: grid;
    place-items: center;
    width: 59px;
    border: 1px solid #b6dbef;
    border-radius: 3px;
    outline: 1px solid #1a4569;
    outline-offset: -1px;
    box-shadow: inset 0 0 0 1px #b6dbef;
    background: linear-gradient(135deg, #a0cbe2, #4d97c4 50%, #4d9dce);
  }

  .apps .stacked {
    box-shadow: inset 0 0 0 1px #b6dbef, inset -4px 0 #5d9dc5, inset -5px 0 #c4e1f0;
  }

  .apps .running {
    background: linear-gradient(135deg, #ebf4f9, #a8cbe2 55%, #79b0d8);
  }

  .tray {
    display: flex;
    align-items: center;
    gap: 9px;
    padding-right: 10px;
  }

  .tray svg:first-child {
    margin-right: 3px;
  }

  .clock {
    display: flex;
    flex-direction: column;
    margin-left: 12px;
    font: 12px/17px 'Open Sans', 'Segoe UI', sans-serif;
    text-align: center;
    letter-spacing: normal;
  }

  .show-desktop {
    width: 14px;
    border: 1px solid #6d8cae;
    background: linear-gradient(135deg, #47698f, #122f57 60%);
  }
</style>
